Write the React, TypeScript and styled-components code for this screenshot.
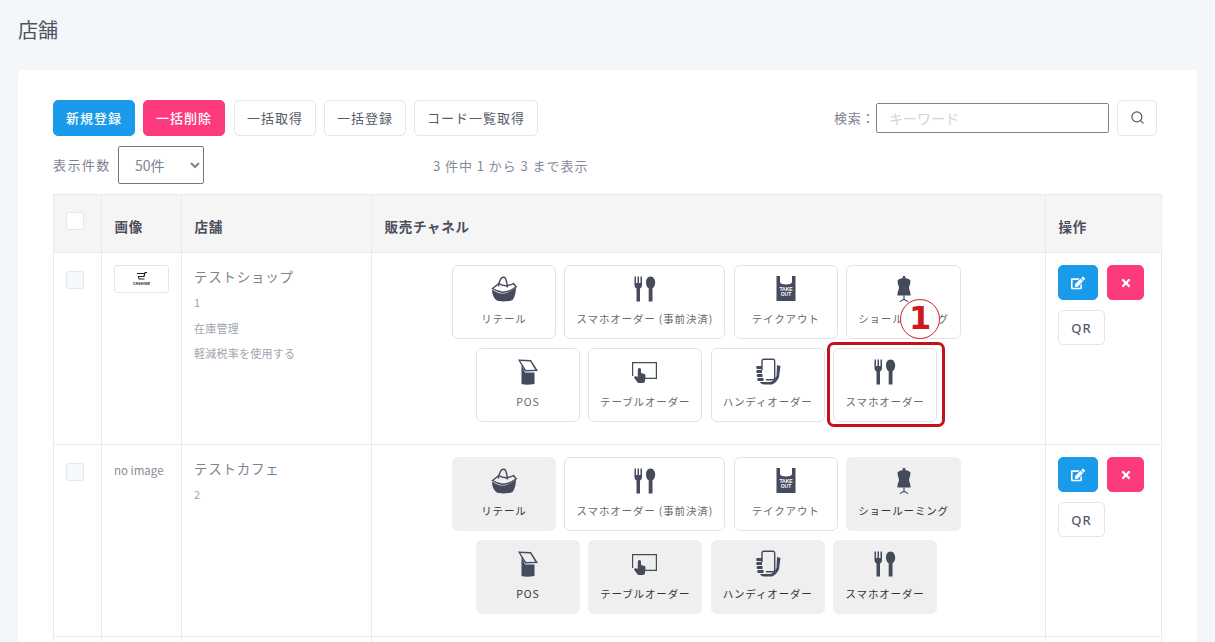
import React from "react";
import styled, { createGlobalStyle } from "styled-components";
import { FaEdit, FaTimes } from "react-icons/fa";
import { Search } from "lucide-react";

const FONT = `"Noto Sans CJK JP", "Noto Sans", sans-serif`;
const INK = "#454a5c";

const Global = createGlobalStyle`
  html, body { margin: 0; padding: 0; height: 642px; overflow: hidden; background: #f4f7fa; }
  body { font-family: ${FONT}; color: #555b68; }
  * { box-sizing: border-box; }
`;

const Page = styled.div`
  padding: 15px 18px 0;
`;
const Title = styled.h1`
  margin: 0 0 25px;
  height: 30px;
  font-size: 20px;
  line-height: 30px;
  font-weight: 400;
  color: #4d525c;
`;
const Card = styled.div`
  background: #fff;
  border-radius: 4px;
  padding: 30px 35px;
`;
const Toolbar = styled.div`
  display: flex;
  align-items: center;
  height: 36px;
  padding-right: 5px;
`;
const Btn = styled.button<{ $tone?: "blue" | "pink"; $w: number; $ml?: number }>`
  width: ${(p) => p.$w}px;
  height: 36px;
  margin-left: ${(p) => p.$ml ?? 0}px;
  flex: none;
  padding: 0 0 2px;
  display: inline-flex;
  align-items: center;
  justify-content: center;
  border-radius: 5px;
  font-family: ${FONT};
  font-size: 13px;
  letter-spacing: 1px;
  font-weight: ${(p) => (p.$tone ? 500 : 400)};
  color: ${(p) => (p.$tone ? "#fff" : "#555b68")};
  background: ${(p) => (p.$tone === "blue" ? "#1a9aea" : p.$tone === "pink" ? "#fd3a7e" : "#fff")};
  border: 1px solid ${(p) => (p.$tone === "blue" ? "#1a9aea" : p.$tone === "pink" ? "#fd3a7e" : "#e3e5e8")};
`;
const SearchGroup = styled.div`
  margin-left: auto;
  display: flex;
  align-items: center;
`;
const SearchLabel = styled.label`
  font-size: 13px;
  letter-spacing: 0.7px;
  color: #7d8391;
  width: 42px;
  padding-bottom: 2px;
`;
const SearchInput = styled.input`
  width: 233px;
  height: 30px;
  border: 1px solid #80838a;
  border-radius: 2px;
  padding: 0 12px;
  font-family: ${FONT};
  font-size: 14px;
  outline: none;
  &::placeholder { color: #d2d4d8; }
`;
const LengthRow = styled.div`
  display: flex;
  align-items: center;
  height: 38px;
  margin: 10px 0;
`;
const LengthLabel = styled.span`
  font-size: 13px;
  letter-spacing: 1.4px;
  color: #7d8391;
  width: 65px;
  padding-bottom: 2px;
  white-space: nowrap;
`;
const LengthSelect = styled.select`
  width: 86px;
  height: 38px;
  border: 1px solid #777;
  border-radius: 2px;
  background: #fff;
  padding: 0 12px;
  font-family: ${FONT};
  font-size: 14px;
  color: #7d8391;
`;
const Info = styled.span`
  margin-left: 229px;
  font-size: 13px;
  letter-spacing: 0.95px;
  color: #858b98;
  white-space: pre;
`;
const Table = styled.table`
  width: 1108px;
  table-layout: fixed;
  border-collapse: collapse;
`;
const Th = styled.th`
  height: 58px;
  background: #f5f5f5;
  border: 1px solid #e9ebee;
  padding: 4px 12.5px 0;
  text-align: left;
  font-size: 13.5px;
  font-weight: 700;
  letter-spacing: 0.75px;
  color: #4a4f5c;
`;
const Td = styled.td`
  height: 192px;
  vertical-align: top;
  border: 1px solid #e9ebee;
  padding: 12px 12px 0;
`;
const Check = styled.span<{ $head?: boolean }>`
  display: block;
  width: 18px;
  height: 18px;
  margin: ${(p) => (p.$head ? "-10px 0 0 -0.5px" : "6px 0 0 0")};
  border: 1px solid #e3e6ea;
  border-radius: 3px;
  background: ${(p) => (p.$head ? "#fff" : "#f6f9fb")};
`;
const Thumb = styled.div`
  width: 55px;
  height: 28px;
  border: 1px solid #e3e5e8;
  border-radius: 3px;
  display: flex;
  flex-direction: column;
  align-items: center;
  justify-content: center;
  line-height: 1;
  background: #fff;
`;
const ThumbText = styled.span`
  font-size: 4px;
  font-weight: 700;
  color: #222;
  line-height: 5px;
`;
const NoImage = styled.div`
  font-size: 11.5px;
  color: #868c99;
  margin-top: 4px;
  line-height: 18px;
`;
const StoreName = styled.div`
  font-size: 13.5px;
  letter-spacing: 0.75px;
  color: #7d8391;
  line-height: 24px;
  margin-bottom: 2px;
  margin-top: -1px;
`;
const StoreMeta = styled.div`
  font-size: 11px;
  line-height: 25.5px;
  letter-spacing: 0.25px;
  color: #a2a6af;
`;
const Channels = styled.div`
  display: flex;
  flex-wrap: wrap;
  justify-content: center;
  gap: 9px 8.4px;
  width: 529px;
  margin-left: 58px;
`;
const Channel = styled.div<{ $on?: boolean; $w: number }>`
  position: relative;
  width: ${(p) => p.$w}px;
  height: 74px;
  flex: none;
  display: flex;
  flex-direction: column;
  align-items: center;
  padding-top: 9px;
  border-radius: 6px;
  background: ${(p) => (p.$on ? "#efefef" : "#fff")};
  border: 1px solid ${(p) => (p.$on ? "#efefef" : "#dfe3e7")};
`;
const ChannelIcon = styled.svg`
  width: 28px;
  height: 28px;
  flex: none;
  fill: ${INK};
`;
const Line = styled.path`
  fill: none;
  stroke: ${INK};
  stroke-width: 1.4;
`;
const ChannelLabel = styled.span<{ $on?: boolean }>`
  margin-top: 8px;
  font-size: 10.5px;
  line-height: 16px;
  letter-spacing: 0.85px;
  white-space: nowrap;
  color: ${(p) => (p.$on ? "#30343c" : "#636976")};
`;
const Highlight = styled.div`
  position: absolute;
  inset: -7px -9px -6px -7px;
  border: 3px solid #c4111b;
  border-radius: 7px;
  pointer-events: none;
`;
const Badge = styled.div`
  position: absolute;
  left: 66px;
  top: -50px;
  width: 40px;
  height: 40px;
  border-radius: 50%;
  border: 1.5px solid #d0242c;
  background: #fff;
  color: #d0171f;
  font-family: "DejaVu Sans", sans-serif;
  font-size: 32px;
  font-weight: 700;
  line-height: 36px;
  text-align: center;
  z-index: 2;
`;
const Ops = styled.div`
  display: flex;
  flex-wrap: wrap;
  gap: 10px 9px;
`;
const OpBtn = styled.button<{ $tone?: "blue" | "pink"; $w: number }>`
  width: ${(p) => p.$w}px;
  height: 35px;
  padding: 0;
  display: flex;
  align-items: center;
  justify-content: center;
  border-radius: 5px;
  font-family: "Noto Sans", sans-serif;
  font-size: 13px;
  font-weight: 500;
  letter-spacing: 1px;
  color: ${(p) => (p.$tone ? "#fff" : "#555b68")};
  background: ${(p) => (p.$tone === "blue" ? "#1a9aea" : p.$tone === "pink" ? "#fd3a7e" : "#fff")};
  border: 1px solid ${(p) => (p.$tone === "blue" ? "#1a9aea" : p.$tone === "pink" ? "#fd3a7e" : "#e3e5e8")};
`;

const Basket = () => (
  <ChannelIcon viewBox="0 0 28 28">
    <path d="M2 14.5 C5 16.5 8.5 18.5 12.5 18.5 C17.5 18.5 22 15.5 26 12.5 C26 17 25 22 22.5 25 C20 26.5 10 27 7 25.5 C4 24 2 19 2 14.5 Z" />
    <Line d="M2.5 13.5 L9 8.5 C13 11.5 18 11.5 23.5 8.5 L26.3 11.8 C22 15 17 17.5 12.5 17.2 C8.5 16.8 5.5 15.5 2.5 13.5 Z" />
    <Line d="M8.5 11.5 C9 5 11.5 1.8 14 2.3 C16.8 2.8 16.5 7 17.5 12.5" />
  </ChannelIcon>
);
const Cutlery = () => (
  <ChannelIcon viewBox="0 0 28 28">
    <path d="M3.5 1.5 H5 V8 H6.5 V1.5 H8 V8 H9.5 V1.5 H11 V10 C11 12 10 13 9 13.5 V26.5 H5.5 V13.5 C4.5 13 3.5 12 3.5 10 Z" />
    <path d="M19.5 1.5 C22.5 1.5 24.2 4.5 24.2 7.5 C24.2 10.5 22.8 12.5 21.5 13.2 V26.5 H17.7 V13.2 C16.3 12.5 15 10.5 15 7.5 C15 4.5 16.5 1.5 19.5 1.5 Z" />
  </ChannelIcon>
);
const Takeout = () => (
  <ChannelIcon viewBox="0 0 28 28">
    <path d="M4.5 1 H8 V7 C8 8.5 10 9.5 14 9.5 C18 9.5 20 8.5 20 7 V1 H23.5 V26 H4.5 Z" />
    <text x="14" y="15.5" textAnchor="middle" fontSize="5" fontWeight="700" fill="#fff" fontFamily="Liberation Sans, sans-serif">TAKE</text>
    <text x="14" y="21" textAnchor="middle" fontSize="5" fontWeight="700" fill="#fff" fontFamily="Liberation Sans, sans-serif">OUT</text>
  </ChannelIcon>
);
const Dress = () => (
  <ChannelIcon viewBox="0 0 28 28">
    <path d="M12.8 1 H15.2 V3 C18 3.5 20.5 4.5 20.5 6 C20.5 9 19 11 19 13 C19 15 21 17 20.5 20.5 L7.5 20.5 C7 17 9 15 9 13 C9 11 7.5 9 7.5 6 C7.5 4.5 10 3.5 12.8 3 Z" />
    <path d="M13.4 20.5 H14.6 V24 L18.5 26.3 L18 27 L14 25 L10 27 L9.5 26.3 L13.4 24 Z" />
  </ChannelIcon>
);
const Pos = () => (
  <ChannelIcon viewBox="0 0 28 28">
    <path d="M4 1.5 L17 2 L24 13 L11 13.5 Z M6.3 3 L12 12 L21.3 11.7 L16.2 3.4 Z" fillRule="evenodd" />
    <path d="M7.5 7 L11 14.5 L20.5 14.5 V26 C15 27 11 27 7.5 26 Z" />
  </ChannelIcon>
);
const TableOrder = () => (
  <ChannelIcon viewBox="0 0 28 28">
    <path d="M1 4 H26 V21 H13 V19.8 H24.8 V5.2 H2.2 V18 H1 Z" />
    <path d="M8.5 10 C9.5 10 10 10.8 10 12 V15 L13.5 16 C14.3 16.3 14.6 17 14.5 18 L14 23 C13.8 24 13 25 12 25 H8 C7 25 6.4 24.4 5.8 23.5 L3 19.5 L4.3 18 L6.8 19 V12 C6.8 10.8 7.5 10 8.5 10 Z" />
  </ChannelIcon>
);
const Handy = () => (
  <ChannelIcon viewBox="0 0 28 28">
    <Line d="M8 12 V3 C8 2 8.7 1.2 9.7 1.2 H19 C20 1.2 20.7 2 20.7 3 V20 C20.7 21 20 21.8 19 21.8 H12" />
    <path d="M3 8 H8 V11 H3 C2 11 2 8 3 8 Z M3 12 H8 V15 H3 C2 15 2 12 3 12 Z M3.5 16 H8.5 V19 H3.5 C2.5 19 2.5 16 3.5 16 Z M4 20 H9.5 V23 H4 C3 23 3 20 4 20 Z" />
    <path d="M6 24 H16 C18 24 21 21 22.5 18 L23 7 L26.5 8 L25 19 C24 22 21 25.5 18 26.5 H10 C8 26.5 6.5 25.5 6 24 Z" />
  </ChannelIcon>
);

type Ch = { label: string; Icon: React.FC; w: number; on?: boolean; mark?: boolean };
const base = (on: boolean[], mark: boolean): Ch[] => [
  { label: "リテール", Icon: Basket, w: 104, on: on[0] },
  { label: "スマホオーダー (事前決済)", Icon: Cutlery, w: 161, on: on[1] },
  { label: "テイクアウト", Icon: Takeout, w: 104, on: on[2] },
  { label: "ショールーミング", Icon: Dress, w: 115, on: on[3] },
  { label: "POS", Icon: Pos, w: 104, on: on[4] },
  { label: "テーブルオーダー", Icon: TableOrder, w: 114, on: on[5] },
  { label: "ハンディオーダー", Icon: Handy, w: 114, on: on[6] },
  { label: "スマホオーダー", Icon: Cutlery, w: 104, on: on[7], mark },
];

const stores = [
  { name: "テストショップ", meta: ["1", "在庫管理", "軽減税率を使用する"], logo: true, channels: base([false, false, false, false, false, false, false, false], true) },
  { name: "テストカフェ", meta: ["2"], logo: false, channels: base([true, false, false, true, true, true, true, true], false) },
  { name: "テストストア", meta: ["3"], logo: false, channels: base([false, false, false, false, false, false, false, false], false) },
];

export default function App() {
  return (
    <Page>
      <Global />
      <Title>店舗</Title>
      <Card>
        <Toolbar>
          <Btn $tone="blue" $w={82}>新規登録</Btn>
          <Btn $tone="pink" $w={82} $ml={8}>一括削除</Btn>
          <Btn $w={82} $ml={9}>一括取得</Btn>
          <Btn $w={82} $ml={8}>一括登録</Btn>
          <Btn $w={124} $ml={8}>コード一覧取得</Btn>
          <SearchGroup>
            <SearchLabel>検索：</SearchLabel>
            <SearchInput placeholder="キーワード" />
            <Btn $w={40} $ml={8} aria-label="検索"><Search size={15} color="#555b68" /></Btn>
          </SearchGroup>
        </Toolbar>
        <LengthRow>
          <LengthLabel>表示件数</LengthLabel>
          <LengthSelect defaultValue="50"><option value="50">50件</option></LengthSelect>
          <Info>3 件中 1 から 3 まで表示</Info>
        </LengthRow>
        <Table>
          <colgroup>
            <col style={{ width: 48 }} />
            <col style={{ width: 80 }} />
            <col style={{ width: 190 }} />
            <col style={{ width: 674 }} />
            <col style={{ width: 116 }} />
          </colgroup>
          <thead>
            <tr>
              <Th><Check $head /></Th>
              <Th>画像</Th>
              <Th>店舗</Th>
              <Th>販売チャネル</Th>
              <Th>操作</Th>
            </tr>
          </thead>
          <tbody>
            {stores.map((s) => (
              <tr key={s.name}>
                <Td><Check /></Td>
                <Td>
                  {s.logo ? (
                    <Thumb>
                      <svg width="12" height="9" viewBox="0 0 12 9" fill="#222">
                        <path d="M1 1 H8 L9 0 H11 V1 H9.6 L8.5 5 H3 L3.5 6.5 H8.5 V7.5 H2.6 L1.8 4 H7.6 L7.9 2 H1 Z" />
                      </svg>
                      <ThumbText>CASHIER</ThumbText>
                    </Thumb>
                  ) : (
                    <NoImage>no image</NoImage>
                  )}
                </Td>
                <Td>
                  <StoreName>{s.name}</StoreName>
                  {s.meta.map((m) => <StoreMeta key={m}>{m}</StoreMeta>)}
                </Td>
                <Td>
                  <Channels>
                    {s.channels.map((c, i) => (
                      <Channel key={i} $on={c.on} $w={c.w}>
                        <c.Icon />
                        <ChannelLabel $on={c.on}>{c.label}</ChannelLabel>
                        {c.mark && (
                          <>
                            <Highlight />
                            <Badge>1</Badge>
                          </>
                        )}
                      </Channel>
                    ))}
                  </Channels>
                </Td>
                <Td>
                  <Ops>
                    <OpBtn $tone="blue" $w={40} aria-label="編集"><FaEdit size={14} /></OpBtn>
                    <OpBtn $tone="pink" $w={37} aria-label="削除"><FaTimes size={12} /></OpBtn>
                    <OpBtn $w={47}>QR</OpBtn>
                  </Ops>
                </Td>
              </tr>
            ))}
          </tbody>
        </Table>
      </Card>
    </Page>
  );
}
